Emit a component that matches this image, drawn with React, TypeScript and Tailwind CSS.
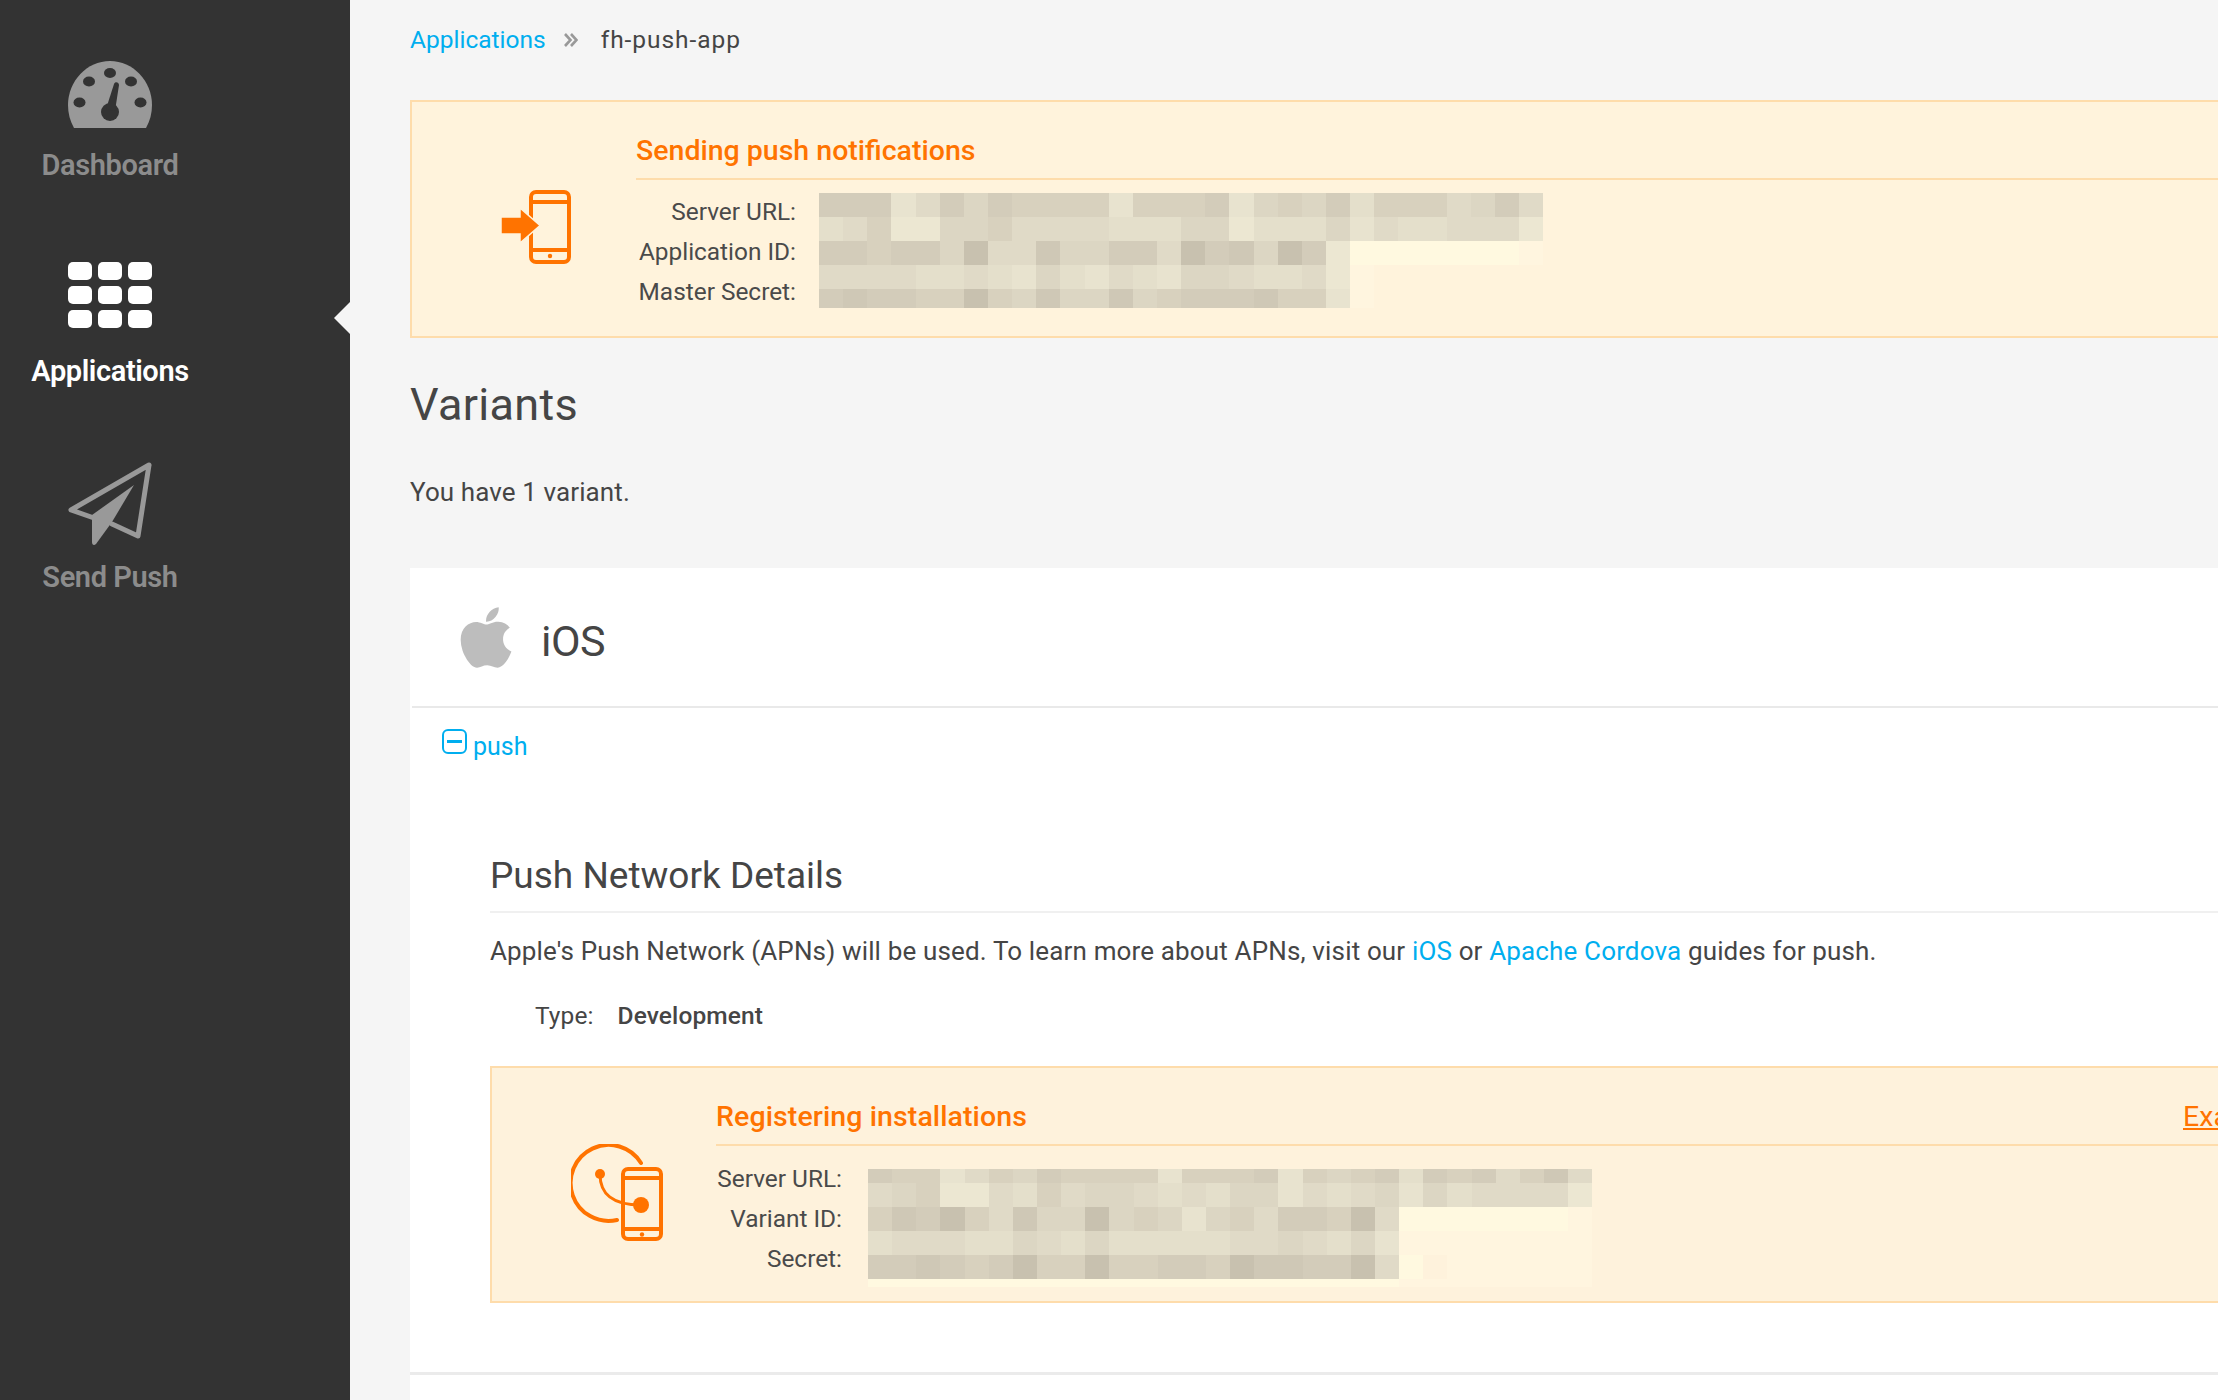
import { FaApple } from "react-icons/fa";

const SHADES: Record<string, string> = {
  a: "bg-[#c8c1af]",
  b: "bg-[#cfc8b6]",
  c: "bg-[#d3ccba]",
  d: "bg-[#d8d1be]",
  e: "bg-[#dcd6c3]",
  f: "bg-[#e0dac7]",
  g: "bg-[#e4dfcb]",
  h: "bg-[#e8e3cf]",
  i: "bg-[#ece7d2]",
  j: "bg-[#fff9e0]",
  k: "bg-[#fff5df]",
  ".": "bg-transparent",
};

type MosaicRow = { height: string; cells: string };

const SENDING_ROWS: MosaicRow[] = [
  { height: "h-[24px]", cells: "ccchfcecddddhdddchedecgdddfecf" },
  { height: "h-[24px]", cells: "gfdiieedffffgggeeigggehfggfffi" },
  { height: "h-[24px]", cells: "ccdcceaffbeeccfacbeacijjjjjjjk" },
  { height: "h-[24px]", cells: "ffffggfghegh" + "fgheefggfik......." },
  { height: "h-[19px]", cells: "cbccddadebee" + "bedcccbddhk......." },
];

const REGISTER_ROWS: MosaicRow[] = [
  { height: "h-[14px]", cells: "cddhfdecddddhdddchdedcgcdcfdbf" },
  { height: "h-[24px]", cells: "fediifgdfeefgfgeehfgfehegffffi" },
  { height: "h-[24px]", cells: "dbcadfbeeaedehedfccdafjjjjjjjk" },
  { height: "h-[24px]", cells: "gfffggefgegggggffefgehkkkkkkkk" },
  { height: "h-[24px]", cells: "ccbcdcaddaddccdabbccafj.kkkkkk" },
  { height: "h-[8px]", cells: "jjjjjjjjjjjjjjjjjjjjjjkkkkkkkk" },
];

function Mosaic({ rows }: { rows: MosaicRow[] }) {
  return (
    <div className="flex w-[724px] flex-col">
      {rows.map((row, rowIndex) => (
        <div key={rowIndex} className={`flex ${row.height}`}>
          {row.cells
            .slice(0, 30)
            .split("")
            .map((shade, index) => (
              <div key={index} className={`flex-1 ${SHADES[shade]}`} />
            ))}
        </div>
      ))}
    </div>
  );
}

function DashboardIcon() {
  return (
    <svg width="84" height="67" viewBox="0 0 84 67">
      <path d="M6 67C2 60 0 52 0 44 0 20 19 0 42 0s42 20 42 44c0 8-2 16-6 23z" fill="#999999" />
      <g fill="#333333">
        <ellipse cx="42" cy="12" rx="6" ry="5" />
        <ellipse cx="21" cy="20.5" rx="6" ry="5" />
        <ellipse cx="63" cy="20.5" rx="6" ry="5" />
        <ellipse cx="11.5" cy="41.5" rx="6" ry="5" />
        <ellipse cx="72.5" cy="41.5" rx="6" ry="5" />
        <circle cx="42" cy="51" r="9" />
        <path d="M38 48 46 23c1-3 5-2 5 1l-4 26z" />
      </g>
    </svg>
  );
}

function AppsIcon() {
  return (
    <div className="grid w-[84px] grid-cols-3 gap-x-[6px] gap-y-[6px]">
      {Array.from({ length: 9 }).map((_, index) => (
        <div key={index} className="h-[18px] rounded-[5px] bg-white" />
      ))}
    </div>
  );
}

function SendIcon() {
  return (
    <svg width="84" height="84" viewBox="0 0 84 84">
      <path
        d="M81 3 3 48l23 8M81 3 70 74 44 62"
        fill="none"
        stroke="#999999"
        strokeWidth="5"
        strokeLinejoin="round"
        strokeLinecap="round"
      />
      <path d="M24 53 66 23 44 60 28 82c-2 2-4 1-4-2z" fill="#999999" />
    </svg>
  );
}

function SendingIcon() {
  return (
    <svg width="70" height="74" viewBox="0 0 70 74" fill="none" stroke="#ff7300" strokeWidth="4">
      <rect x="30" y="2" width="38" height="70" rx="5" />
      <path d="M30 12h38M30 60h38" />
      <circle cx="49" cy="66" r="2.2" fill="#ff7300" stroke="none" />
      <path d="M0 27h19v-9l20 17.5L19 53v-9H0z" fill="#ff7300" stroke="#fff3dc" strokeWidth="1.5" />
    </svg>
  );
}

function RegisterIcon() {
  return (
    <svg width="92" height="98" viewBox="0 0 92 98" fill="none" stroke="#ff7300" strokeWidth="4">
      <path d="M70 19A38 38 0 1 0 46 76" strokeLinecap="round" />
      <rect x="52" y="25" width="38" height="70" rx="5" />
      <path d="M52 34h38M52 85h38" />
      <circle cx="71" cy="90.5" r="2.2" fill="#ff7300" stroke="none" />
      <path d="M29 30c0 20 12 31 41 31" strokeWidth="3" />
      <circle cx="29" cy="30" r="5" fill="#ff7300" stroke="none" />
      <circle cx="70" cy="61" r="8" fill="#ff7300" stroke="none" />
    </svg>
  );
}

function NavItem({ icon, label, active, iconBox }: { icon: React.ReactNode; label: string; active?: boolean; iconBox: string }) {
  return (
    <div className="flex flex-col items-center">
      <div className={`flex items-start justify-center ${iconBox}`}>{icon}</div>
      <div className={`text-[29px] leading-[36px] font-semibold tracking-[-0.4px] ${active ? "text-white" : "text-[#8c8c8c]"}`}>
        {label}
      </div>
    </div>
  );
}

function InfoRow({ label }: { label: string }) {
  return <div className="h-[40px] w-full text-right text-[24.4px] leading-[40px] text-[#4a4a4a]">{label}</div>;
}

export default function App() {
  return (
    <div className="flex h-[1400px] w-[2218px] overflow-hidden bg-[#f5f5f5] font-['Roboto',sans-serif] text-[#454545]">
      <aside className="relative h-full w-[350px] shrink-0 bg-[#333333]">
        <div className="flex w-[220px] flex-col items-center pt-[61px]">
          <NavItem icon={<DashboardIcon />} label="Dashboard" iconBox="h-[86px]" />
          <div className="mt-[79px]">
            <NavItem icon={<AppsIcon />} label="Applications" iconBox="h-[91px]" active />
          </div>
          <div className="mt-[73px]">
            <NavItem icon={<SendIcon />} label="Send Push" iconBox="h-[97px]" />
          </div>
        </div>
        <div className="absolute top-[302px] right-0 h-0 w-0 border-y-[16px] border-r-[16px] border-y-transparent border-r-[#f5f5f5]" />
      </aside>

      <main className="min-w-0 flex-1 overflow-hidden pl-[60px]">
        <div className="w-[1900px]">
          <nav className="flex h-[80px] items-center text-[24.5px]">
            <a className="text-[#00aeef]">Applications</a>
            <svg className="mr-[23px] ml-[18px]" width="14" height="14" viewBox="0 0 14 14" fill="none" stroke="#999999" strokeWidth="2.6">
              <path d="M1 1l5.5 6L1 13M7 1l5.5 6L7 13" />
            </svg>
            <span className="tracking-[0.95px]">fh-push-app</span>
          </nav>

          <section className="mt-[20px] flex h-[238px] border-2 border-[#fedcab] bg-[#fff3dc]">
            <div className="flex w-[224px] shrink-0 justify-end pt-[88px] pr-[65px]">
              <SendingIcon />
            </div>
            <div className="flex-1">
              <div className="flex h-[78px] items-end border-b-2 border-[#fedcab] pb-[7px] text-[28.5px] leading-[40px] font-medium text-[#ff7300]">
                Sending push notifications
              </div>
              <div className="flex pt-[12px]">
                <div className="w-[160px] shrink-0">
                  <InfoRow label="Server URL:" />
                  <InfoRow label="Application ID:" />
                  <InfoRow label="Master Secret:" />
                </div>
                <div className="pt-[1px] pl-[23px]">
                  <Mosaic rows={SENDING_ROWS} />
                </div>
              </div>
            </div>
          </section>

          <h2 className="mt-[43px] text-[45px] leading-[48px] tracking-[0.3px]">Variants</h2>
          <p className="mt-[43px] text-[26px] leading-[40px] tracking-[0.1px]">You have 1 variant.</p>

          <section className="mt-[56px] bg-white pb-[40px]">
            <header className="ml-[2px] flex h-[140px] items-center border-b-2 border-[#e9e9e9] pl-[44px]">
              <FaApple className="h-[69px] w-[60px] text-[#bdbdbd]" />
              <span className="mt-[8px] ml-[25px] text-[43px] leading-[48px] tracking-[-0.5px]">iOS</span>
            </header>

            <div className="flex pt-[21px] pl-[32px] text-[#00aeef]">
              <div className="flex h-[25px] w-[25px] items-center justify-center rounded-[6px] border-[2.5px] border-[#00aeef]">
                <div className="h-[2.5px] w-[15px] bg-[#00aeef]" />
              </div>
              <span className="mt-[1px] ml-[6px] text-[25px] leading-[34px]">push</span>
            </div>

            <div className="pl-[80px]">
              <h3 className="mt-[90px] flex h-[59px] items-start border-b-2 border-[#f0f0f0] text-[37px] leading-[44px]">
                Push Network Details
              </h3>
              <p className="mt-[20px] text-[26px] leading-[36px] tracking-[0.15px]">
                Apple's Push Network (APNs) will be used. To learn more about APNs, visit our{" "}
                <a className="text-[#00aeef]">iOS</a> or <a className="text-[#00aeef]">Apache Cordova</a> guides for push.
              </p>
              <div className="mt-[29px] flex pl-[45px] text-[24.5px] leading-[36px] tracking-[0.1px]">
                <span>Type:</span>
                <span className="ml-[24px] font-medium">Development</span>
              </div>

              <section className="mt-[32px] flex h-[237px] border-2 border-[#fedcab] bg-[#fef2dc]">
                <div className="flex w-[224px] shrink-0 justify-end pt-[76px] pr-[53px]">
                  <RegisterIcon />
                </div>
                <div className="flex-1">
                  <div className="flex h-[78px] items-end border-b-2 border-[#fedcab] pb-[7px] text-[28.5px] leading-[40px] font-medium tracking-[0.1px] text-[#ff7300]">
                    <span className="w-[1467px] shrink-0">Registering installations</span>
                    <a className="font-normal underline">Example</a>
                  </div>
                  <div className="flex pt-[13px]">
                    <div className="w-[126px] shrink-0">
                      <InfoRow label="Server URL:" />
                      <InfoRow label="Variant ID:" />
                      <InfoRow label="Secret:" />
                    </div>
                    <div className="pt-[10px] pl-[26px]">
                      <Mosaic rows={REGISTER_ROWS} />
                    </div>
                  </div>
                </div>
              </section>
            </div>

            <div className="mt-[69px] h-[3px] bg-[#ebebeb]" />
          </section>
        </div>
      </main>
    </div>
  );
}
